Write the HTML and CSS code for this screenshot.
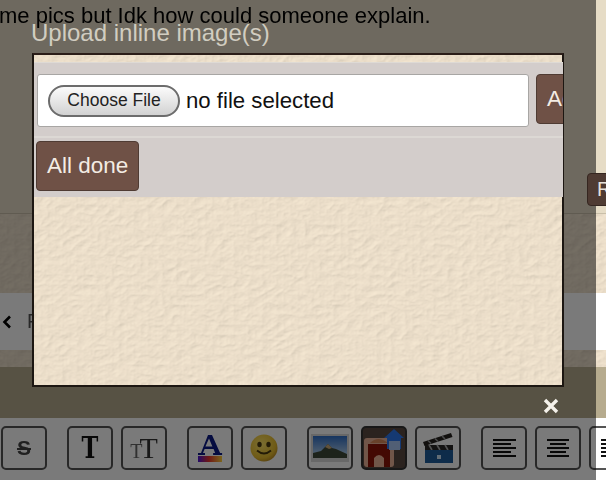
FILE: index.html
```html
<!DOCTYPE html>
<html lang="en">
<head>
    <meta charset="UTF-8">
    <meta name="viewport" content="width=device-width, initial-scale=1.0">
    <title>Upload inline image(s)</title>
    <link rel="stylesheet" href="styles.css">
</head>
<body>
    <svg class="defs" width="0" height="0">
        <filter id="leather" x="0" y="0" width="100%" height="100%">
            <feTurbulence type="turbulence" baseFrequency="0.07 0.1" numOctaves="3" seed="7"/>
            <feDiffuseLighting lighting-color="#ecdfca" surfaceScale="0.6" diffuseConstant="1.12">
                <feDistantLight azimuth="45" elevation="62"/>
            </feDiffuseLighting>
            <feGaussianBlur stdDeviation="0.5"/>
        </filter>
    </svg>

    <div class="page">
        <p class="post-text">me pics but Idk how could someone explain.</p>
        <div class="band">
            <svg class="texture"><rect width="100%" height="100%" filter="url(#leather)"/></svg>
        </div>
        <div class="nav">
            <svg class="chevron" width="10" height="14" viewBox="0 0 10 14"><path d="M8 1.500 2.500 7 8 12.500" fill="none" stroke="#000" stroke-width="2.600"/></svg>
            <span class="nav-label">F</span>
        </div>
        <div class="band band-thin">
            <svg class="texture"><rect width="100%" height="100%" filter="url(#leather)"/></svg>
        </div>
        <div class="gap"></div>
        <div class="toolbar">
            <div class="tool"><span class="glyph-s">S</span></div>
            <div class="tool-group">
                <div class="tool"><span class="glyph-t">T</span></div>
                <div class="tool"><span class="glyph-tt"><small>T</small>T</span></div>
            </div>
            <div class="tool-group">
                <div class="tool">
                    <svg width="30" height="30" viewBox="0 0 30 30">
                        <defs>
                            <linearGradient id="rainbow" x1="0" x2="1">
                                <stop offset="0" stop-color="#4a16d8"/>
                                <stop offset=".45" stop-color="#e8322a"/>
                                <stop offset="1" stop-color="#ffd23c"/>
                            </linearGradient>
                        </defs>
                        <path d="M3 22h7v-2H8l1.600-4h9l1.500 4h-2v2h9v-2h-2L17 2h-4L6 20H3zm7.400-8.500 3.600-8 3.400 8z" fill="#0c1a86" fill-rule="evenodd"/>
                        <rect x="3" y="23" width="24" height="6" fill="url(#rainbow)"/>
                    </svg>
                </div>
                <div class="tool">
                    <svg width="30" height="30" viewBox="0 0 30 30">
                        <defs>
                            <radialGradient id="face" cx=".4" cy=".35" r=".7">
                                <stop offset="0" stop-color="#ffe66a"/>
                                <stop offset=".75" stop-color="#e8bd2e"/>
                                <stop offset="1" stop-color="#b98a24"/>
                            </radialGradient>
                        </defs>
                        <circle cx="15" cy="15" r="13.500" fill="url(#face)"/>
                        <ellipse cx="10.500" cy="11.500" rx="2.200" ry="2.800" fill="#4a3a10"/>
                        <ellipse cx="19.500" cy="11.500" rx="2.200" ry="2.800" fill="#4a3a10"/>
                        <path d="M8 17.500q7 6 14 0" fill="none" stroke="#4a3a10" stroke-width="1.800"/>
                    </svg>
                </div>
            </div>
            <div class="tool-group">
                <div class="tool">
                    <svg width="38" height="30" viewBox="0 0 38 30">
                        <defs>
                            <linearGradient id="sky" x1="0" x2="0" y1="0" y2="1">
                                <stop offset="0" stop-color="#2f6fc8"/>
                                <stop offset="1" stop-color="#c6def0"/>
                            </linearGradient>
                        </defs>
                        <rect x="0" y="1" width="38" height="28" fill="#d9d9d9"/>
                        <rect x="2" y="3" width="34" height="22" fill="url(#sky)"/>
                        <path d="M2 25v-5l8-2 7-7 4 4 4 1 11 5v4z" fill="#3d4a3a"/>
                        <path d="M14 14l3-3 4 4-3 1z" fill="#c9a97a"/>
                    </svg>
                </div>
                <div class="tool tool-active">
                    <svg width="40" height="38" viewBox="0 0 40 38">
                        <rect x="0" y="9" width="30" height="29" rx="3" fill="#ecb59a"/>
                        <path d="M4 38V15h22v23h-6v-9q-5-6-10 0v9z" fill="#8d1408"/>
                        <path d="M6 14q8-8 18 0z" fill="#d98a5a"/>
                        <path d="M30 0 40 9h-3v11H23V9h-3z" fill="#2d78ee"/>
                        <rect x="25" y="12" width="11" height="9" fill="#a9c6f5"/>
                    </svg>
                </div>
                <div class="tool">
                    <svg width="32" height="32" viewBox="0 0 32 32">
                        <path d="M1 10 29 1l1.500 4-28 9z" fill="#26221e"/>
                        <path d="M6 8.500l3 3M13 6.500l3 3M20 4l3 3" stroke="#9a9a9a" stroke-width="1.600"/>
                        <rect x="3" y="13" width="28" height="5" fill="#2a2826"/>
                        <path d="M7 13l3 5M15 13l3 5M23 13l3 5" stroke="#aaa" stroke-width="1.600"/>
                        <rect x="3" y="18" width="28" height="13" fill="#1f5d9c"/>
                        <rect x="15" y="23" width="4" height="4" fill="#cfe3f5"/>
                    </svg>
                </div>
            </div>
            <div class="tool-group">
                <div class="tool"><div class="lines lines-left"><i></i><i></i><i></i><i></i><i></i></div></div>
                <div class="tool"><div class="lines lines-center"><i></i><i></i><i></i><i></i><i></i></div></div>
                <div class="tool"><div class="lines"><i></i><i></i><i></i><i></i><i></i></div></div>
            </div>
        </div>
    </div>

    <div class="overlay"></div>
    <button class="side-btn">R</button>
    <svg class="close" width="16" height="16" viewBox="0 0 16 16"><path d="M2 2 14 14M14 2 2 14" stroke="#f4f1ea" stroke-width="3.400"/></svg>

    <div class="modal">
        <h1 class="modal-title">Upload inline image(s)</h1>
        <svg class="texture"><rect width="100%" height="100%" filter="url(#leather)"/></svg>
        <div class="modal-panel">
            <div class="upload-row">
                <div class="file-input">
                    <span class="file-btn">Choose File</span>
                    <span class="file-name">no file selected</span>
                </div>
                <button class="brown-btn add-btn">Add</button>
            </div>
            <div class="done-row">
                <button class="brown-btn">All done</button>
            </div>
        </div>
    </div>
</body>
</html>
```

FILE: styles.css
```css
* {
    box-sizing: border-box;
}
body {
    margin: 0;
    width: 606px;
    height: 480px;
    overflow: hidden;
    position: relative;
    font-family: "Liberation Sans", Arial, sans-serif;
    background: #e6dcc6;
}
.defs {
    position: absolute;
}
.page {
    display: flex;
    flex-direction: column;
    height: 480px;
    filter: blur(0.4px);
}
.post-text {
    margin: 0 0 0 -1px;
    height: 213px;
    padding-top: 3px;
    font-size: 22px;
    line-height: 25px;
    color: #000;
    white-space: nowrap;
}
.band {
    position: relative;
    height: 80px;
    border-top: 1px solid #c9bfa9;
}
.band-thin {
    height: 17px;
    border-top: 0;
}
.texture {
    position: absolute;
    inset: 0;
    width: 100%;
    height: 100%;
}
.nav {
    display: flex;
    align-items: center;
    height: 57px;
    padding-left: 2px;
    background: #fff;
}
.nav-label {
    margin-left: 15px;
    font-size: 20px;
    color: #555;
}
.gap {
    height: 51px;
    background: #b6ab8e;
}
.toolbar {
    display: flex;
    gap: 20px;
    height: 62px;
    padding: 8px 0 0 1px;
    background: #fff;
}
.tool-group {
    display: flex;
    gap: 8px;
}
.tool {
    display: flex;
    flex: none;
    align-items: center;
    justify-content: center;
    width: 46px;
    height: 44px;
    border: 2px solid #555;
    border-radius: 5px;
    background: #fff;
}
.tool-active {
    background: #5a4a42;
    border-color: #333;
}
.glyph-s {
    font-size: 21px;
    font-weight: bold;
    color: #444;
    text-decoration: line-through;
}
.glyph-t {
    font-family: "DejaVu Serif", serif;
    font-size: 29px;
    font-weight: bold;
    color: #111;
    transform: scaleX(0.78);
}
.glyph-tt {
    font-family: "Liberation Serif", serif;
    font-size: 30px;
    line-height: 1;
    color: #333;
}
.glyph-tt small {
    margin-right: -3px;
    font-size: 20px;
    color: #666;
}
.lines {
    display: flex;
    flex-direction: column;
    gap: 1.500px;
    width: 23px;
}
.lines i {
    height: 2.500px;
    background: #111;
}
.lines-left i:nth-child(even) {
    width: 18px;
}
.lines-center {
    align-items: center;
}
.lines-center i {
    width: 22px;
}
.lines-center i:nth-child(even) {
    width: 16px;
}

/* dim layer stops short of the right edge */
.overlay {
    position: absolute;
    top: 0;
    left: 0;
    width: 596px;
    height: 480px;
    background: rgba(0, 0, 0, 0.52);
}
.side-btn {
    position: absolute;
    top: 173px;
    left: 587px;
    width: 40px;
    height: 33px;
    padding: 0 0 0 9px;
    text-align: left;
    border: 1px solid #352620;
    border-radius: 4px;
    background: #4f3b33;
    color: #e8e2da;
    font: 20px "Liberation Sans", sans-serif;
}
.close {
    position: absolute;
    top: 398px;
    left: 543px;
}
.modal {
    position: absolute;
    top: 53px;
    left: 32px;
    width: 532px;
    height: 334px;
    padding-top: 7px;
    border: 2px solid #1d1712;
    border-top-color: #2b1d18;
}
.modal-title {
    position: absolute;
    top: -36px;
    left: -3px;
    margin: 0;
    font-size: 24px;
    font-weight: normal;
    white-space: nowrap;
    color: rgba(228, 224, 212, 0.85);
}
.modal-panel {
    position: relative;
    height: 135px;
    margin-right: -1px;
    overflow: hidden;
    background: #d3cdcb;
    border-top: 1px solid #dedad5;
}
.upload-row {
    display: flex;
    gap: 7px;
    height: 75px;
    padding: 11px 0 0 3px;
    border-bottom: 2px solid #dcd8d4;
}
.file-input {
    display: flex;
    flex: none;
    align-items: center;
    gap: 6px;
    width: 492px;
    height: 53px;
    padding-left: 10px;
    background: #fff;
    border: 1px solid #a8a6a4;
    border-radius: 3px;
}
.file-btn {
    display: flex;
    align-items: center;
    justify-content: center;
    width: 132px;
    height: 32px;
    border: 2px solid #6c6c6c;
    border-radius: 16px;
    background: linear-gradient(#fbfbfb, #d2d2d2);
    font-size: 17.500px;
    color: #222;
}
.file-name {
    font-size: 22.200px;
    color: #111;
}
.brown-btn {
    flex: none;
    height: 50px;
    padding: 0 10px;
    border: 1px solid #4f3b33;
    border-radius: 4px;
    background: #6f5146;
    color: #f3ece4;
    font: 22.500px "Liberation Sans", sans-serif;
}
.add-btn {
    width: 60px;
    text-align: left;
}
.done-row {
    padding: 3px 0 0 2px;
}
```
